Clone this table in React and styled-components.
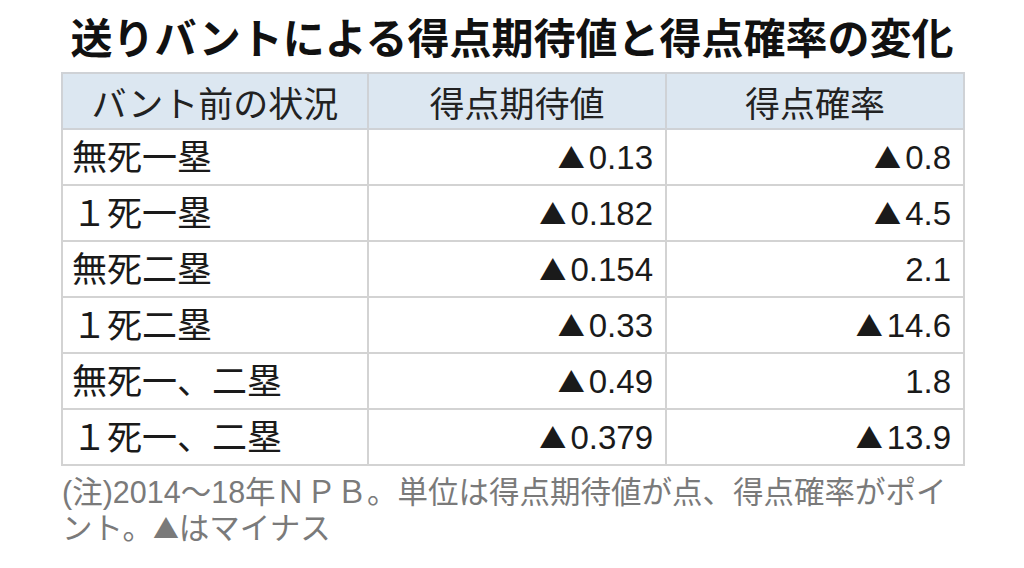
import React from "react";
import styled, { createGlobalStyle } from "styled-components";

const GlobalStyle = createGlobalStyle`
  html, body {
    margin: 0;
    padding: 0;
    background: #fff;
  }
  body {
    font-family: "Liberation Sans", "Noto Sans CJK JP", sans-serif;
    color: #1a1a1a;
  }
`;

const rows = [
  { label: "無死一塁", expect: "0.13", expectNeg: true, prob: "0.8", probNeg: true },
  { label: "１死一塁", expect: "0.182", expectNeg: true, prob: "4.5", probNeg: true },
  { label: "無死二塁", expect: "0.154", expectNeg: true, prob: "2.1", probNeg: false },
  { label: "１死二塁", expect: "0.33", expectNeg: true, prob: "14.6", probNeg: true },
  { label: "無死一、二塁", expect: "0.49", expectNeg: true, prob: "1.8", probNeg: false },
  { label: "１死一、二塁", expect: "0.379", expectNeg: true, prob: "13.9", probNeg: true },
];

const Page = styled.div`
  width: 900px;
  margin-left: 62px;
  padding-top: 15px;
`;

const Title = styled.h1`
  margin: 0 0 7px;
  font-size: 42px;
  line-height: 50px;
  font-weight: bold;
  text-align: center;
  color: #111;
`;

const Table = styled.table`
  width: 902px;
  border-collapse: collapse;
  table-layout: fixed;
  margin-left: -1px;
`;

const HeadCell = styled.th`
  height: 54px;
  padding: 0;
  background: #dce7f1;
  border: 2px solid #cfd2d6;
  font-size: 35px;
  font-weight: normal;
  text-align: center;
  color: #222;
`;

const Cell = styled.td`
  height: 54px;
  padding: 0 ${(p) => (p.$num ? "12px" : "9px")};
  border: 2px solid #d3d3d3;
  font-size: ${(p) => (p.$num ? "33px" : "35px")};
  line-height: 1;
  text-align: ${(p) => (p.$num ? "right" : "left")};
  white-space: nowrap;
  color: #1a1a1a;
`;

const Minus = styled.span`
  font-family: "Noto Sans CJK JP", sans-serif;
  font-size: 0.82em;
  margin-right: 4px;
`;

const Note = styled.p`
  margin: 8px 0 0;
  font-size: 30.5px;
  line-height: 36px;
  color: #7a7a7a;
  white-space: nowrap;
`;

const NoteMark = styled.span`
  font-family: "Noto Sans CJK JP", sans-serif;
  font-size: 0.85em;
`;

function Value({ neg, children }) {
  return (
    <>
      {neg && <Minus>▲</Minus>}
      {children}
    </>
  );
}

export default function App() {
  return (
    <>
      <GlobalStyle />
      <Page>
        <Title>送りバントによる得点期待値と得点確率の変化</Title>
        <Table>
          <colgroup>
            <col style={{ width: "306px" }} />
            <col style={{ width: "298px" }} />
            <col style={{ width: "298px" }} />
          </colgroup>
          <thead>
            <tr>
              <HeadCell>バント前の状況</HeadCell>
              <HeadCell>得点期待値</HeadCell>
              <HeadCell>得点確率</HeadCell>
            </tr>
          </thead>
          <tbody>
            {rows.map((r) => (
              <tr key={r.label}>
                <Cell>{r.label}</Cell>
                <Cell $num>
                  <Value neg={r.expectNeg}>{r.expect}</Value>
                </Cell>
                <Cell $num>
                  <Value neg={r.probNeg}>{r.prob}</Value>
                </Cell>
              </tr>
            ))}
          </tbody>
        </Table>
        <Note>
          (注)2014～18年ＮＰＢ。単位は得点期待値が点、得点確率がポイ
          <br />
          ント。<NoteMark>▲</NoteMark>はマイナス
        </Note>
      </Page>
    </>
  );
}
